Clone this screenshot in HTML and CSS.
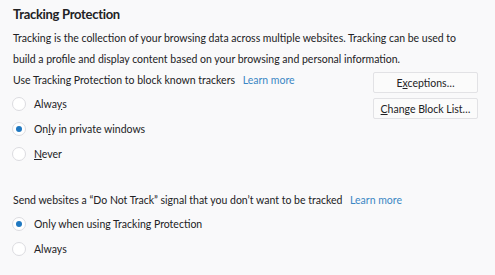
FILE: index.html
```html
<!DOCTYPE html>
<html lang="en">
<head>
  <meta charset="UTF-8">
  <title>Tracking Protection</title>
  <link rel="stylesheet" href="styles.css">
</head>
<body>
  <div class="pane">
    <h2 class="pane-title">Tracking Protection</h2>
    <p class="pane-desc">Tracking is the collection of your browsing data across multiple websites. Tracking can be used to build a profile and display content based on your browsing and personal information.</p>
    <div class="tp-row">
      <div class="tp-options">
        <div class="line">Use Tracking Protection to block known trackers <a class="learn" href="#">Learn more</a></div>
        <label class="radio"><span class="dot"></span><span>Alwa<u>y</u>s</span></label>
        <label class="radio checked"><span class="dot"></span><span>On<u>l</u>y in private windows</span></label>
        <label class="radio"><span class="dot"></span><span><u>N</u>ever</span></label>
      </div>
      <div class="tp-buttons">
        <button class="btn">E<u>x</u>ceptions…</button>
        <button class="btn"><u>C</u>hange Block List…</button>
      </div>
    </div>
    <div class="dnt">
      <div class="line">Send websites a “Do Not Track” signal that you don’t want to be tracked <a class="learn" href="#">Learn more</a></div>
      <label class="radio checked"><span class="dot"></span><span>Only when using Tracking Protection</span></label>
      <label class="radio"><span class="dot"></span><span>Always</span></label>
    </div>
  </div>
</body>
</html>
```
FILE: styles.css
```css
html, body {
  margin: 0; padding: 0;
  background: #f9f9fa;
  color: #222224;
  font-family: 'Lato', 'Open Sans', Arial, sans-serif;
  font-size: 10.5px;
}
.pane {
  padding: 4px 13px 0 13px;
}
.pane-title {
  margin: 0;
  font-size: 13px;
  font-weight: 700;
  letter-spacing: -0.3px;
  line-height: 20px;
}
.pane-desc {
  margin: 4px 0 0 0;
  line-height: 21px;
  width: 460px;
}
.line {
  line-height: 21px;
}
.learn {
  text-decoration: none;
  margin-left: 5px;
  color: #3b87c4;
}
.tp-row {
  display: flex;
  justify-content: space-between;
}
.tp-options {
  display: flex;
  flex-direction: column;
}
.radio {
  display: flex;
  align-items: center;
  gap: 8px;
  height: 25px;
}
.dot {
  width: 14px; height: 14px;
  border-radius: 50%;
  border: 1px solid #dcdce0;
  background: #fff;
  box-sizing: border-box;
  position: relative;
  margin-left: -1px;
}
.radio.checked .dot::after {
  content: "";
  position: absolute;
  left: 3px; top: 3px;
  width: 6px; height: 6px;
  border-radius: 50%;
  background: #1f78c1;
}
.tp-buttons {
  display: flex;
  flex-direction: column;
  gap: 5px;
  padding-top: 2px;
  padding-right: 4px;
}
.btn {
  font: inherit;
  color: #222224;
  width: 105px;
  height: 21px;
  padding: 0;
  background: #fbfbfb;
  border: 1px solid #e2e2e5;
  border-radius: 2px;
}
.dnt {
  margin-top: 24px;
  display: flex;
  flex-direction: column;
}
```
